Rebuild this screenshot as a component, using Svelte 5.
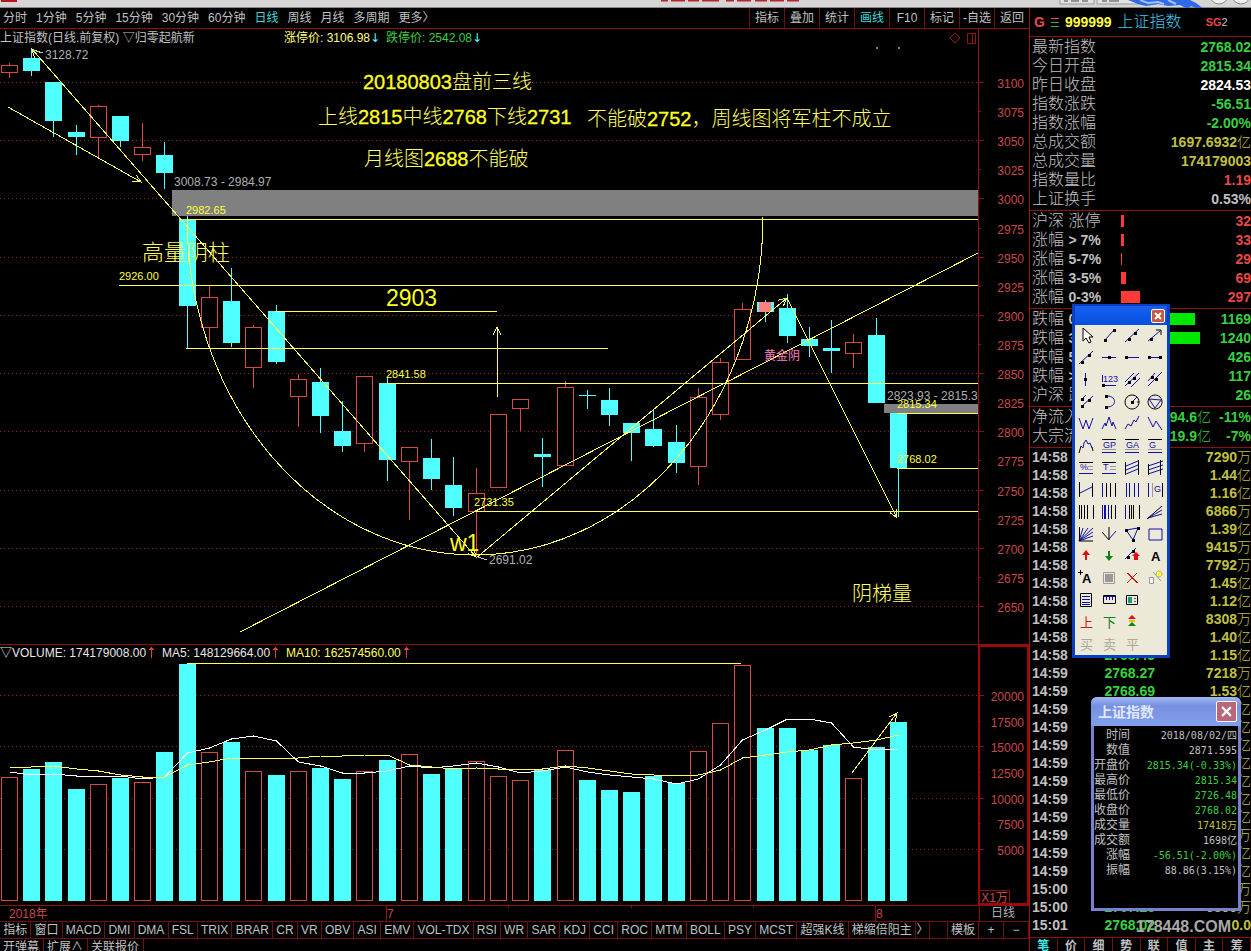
<script lang="ts">
	type Candle = [string, number, number, number, number, number];
	type Icon = {
		name: string;
		blue?: string;
		black?: string;
		dots?: number[][];
		shapes?: string[][];
		text?: string;
		color?: string;
		size?: number;
	};

	const periods = ['分时', '1分钟', '5分钟', '15分钟', '30分钟', '60分钟', '日线', '周线', '月线', '多周期', '更多〉'];
	const tools = ['指标', '叠加', '统计', '画线', 'F10', '标记', '-自选', '返回'];
	const indicators = [
		'指标', '窗口', 'MACD', 'DMI', 'DMA', 'FSL', 'TRIX', 'BRAR', 'CR', 'VR', 'OBV', 'ASI', 'EMV', 'VOL-TDX',
		'RSI', 'WR', 'SAR', 'KDJ', 'CCI', 'ROC', 'MTM', 'BOLL', 'PSY', 'MCST', '超强K线', '梯缩倍阳主'
	];
	const sideTabs = ['笔', '价', '细', '势', '联', '值', '主', '筹'];

	// kind, high, body top, body bottom, low, volume top (chart units)
	const candles: Candle[] = [
		['up', 63, 65, 73, 78, 777],
		['down', 49, 58, 71, 76, 769],
		['down', 82, 82, 121, 137, 762],
		['down', 125, 132, 137, 155, 789],
		['up', 105, 106, 138, 158, 784],
		['down', 116, 116, 141, 147, 778],
		['up', 123, 147, 155, 161, 782],
		['down', 142, 155, 173, 189, 752],
		['down', 216, 219, 306, 349, 664],
		['up', 286, 297, 328, 347, 752],
		['down', 268, 301, 343, 347, 742],
		['up', 325, 327, 368, 388, 771],
		['down', 305, 311, 362, 364, 775],
		['up', 374, 379, 397, 427, 771],
		['down', 368, 382, 416, 433, 768],
		['down', 401, 431, 446, 452, 779],
		['up', 376, 376, 444, 452, 771],
		['down', 377, 383, 460, 481, 760],
		['up', 447, 447, 462, 520, 754],
		['down', 439, 458, 479, 490, 774],
		['down', 457, 485, 508, 516, 768],
		['up', 468, 493, 512, 556, 761],
		['up', 414, 414, 488, 488, 776],
		['up', 399, 399, 409, 431, 780],
		['down', 438, 454, 457, 487, 770],
		['up', 381, 387, 466, 466, 750],
		['down', 390, 395, 396, 409, 780],
		['down', 388, 400, 415, 426, 790],
		['down', 423, 423, 433, 461, 792],
		['down', 409, 429, 446, 447, 776],
		['down', 425, 442, 463, 473, 783],
		['up', 388, 397, 467, 485, 751],
		['up', 358, 362, 415, 420, 723],
		['up', 303, 309, 360, 360, 665],
		['down', 300, 302, 312, 322, 728],
		['down', 294, 308, 336, 343, 728],
		['down', 327, 339, 346, 357, 750],
		['down', 320, 348, 351, 373, 745],
		['up', 334, 342, 354, 368, 778],
		['down', 318, 335, 403, 403, 747],
		['down', 413, 413, 468, 517, 722]
	];
	const ma5 = [
		772, 775, 774, 776, 776, 776, 779, 777, 753, 748, 739, 736, 741, 762, 766, 773, 773, 771, 766, 768, 766,
		763, 767, 773, 771, 767, 772, 775, 777, 779, 784, 779, 765, 740, 730, 719, 719, 723, 747, 750, 749
	];
	const ma10 = [
		767, 767, 766, 769, 771, 775, 777, 777, 765, 762, 758, 758, 759, 758, 756, 756, 755, 755, 765, 767, 769,
		768, 769, 769, 769, 766, 768, 771, 774, 775, 776, 775, 770, 758, 755, 752, 750, 745, 743, 740, 735
	];

	const barX = (i: number) => Math.floor(9.38 + 22.225 * i) + 0.5;
	const priceY = (p: number) => Math.round(82 + (3100 - p) * 1.1645) + 0.5;
	const volumeY = (v: number) => Math.round(695 + (20000 - v) * 0.01025) + 0.5;
	const toPoints = (list: number[]) => list.map((y, i) => `${barX(i)},${y}`).join(' ');

	const prices = Array.from({ length: 19 }, (_, i) => 3100 - i * 25);
	const volumes = [20000, 17500, 15000, 12500, 10000, 7500, 5000];

	// x1, x2, y
	const levels = [
		[187, 978, 219],
		[119, 978, 285],
		[276, 497, 311],
		[186, 608, 348],
		[387, 978, 383],
		[897, 978, 413],
		[897, 978, 468],
		[476, 978, 511]
	];

	// Arrow head at the end of a segment
	function arrowHead(x1: number, y1: number, x2: number, y2: number) {
		const a = Math.atan2(y2 - y1, x2 - x1);
		const at = (d: number) => `${x2 - 9 * Math.cos(a + d)} ${y2 - 9 * Math.sin(a + d)}`;
		return `M${at(0.45)}L${x2} ${y2}L${at(-0.45)}`;
	}

	// Keep the 亿 / 万 unit apart from the number
	const splitUnit = (value: string) => [value.replace(/[亿万]$/, ''), value.match(/[亿万]$/)?.[0] ?? ''];

	const segments = [
		[476, 557, 32, 49],
		[32, 49, 476, 557],
		[8, 107, 141, 182],
		[476, 558, 787, 298],
		[787, 298, 897, 518],
		[497, 397, 497, 327]
	];

	const quotes = [
		['最新指数', '2768.02', 'green'],
		['今日开盘', '2815.34', 'green'],
		['昨日收盘', '2824.53', 'white'],
		['指数涨跌', '-56.51', 'green'],
		['指数涨幅', '-2.00%', 'green'],
		['总成交额', '1697.6932亿', 'gold'],
		['总成交量', '174179003', 'gold'],
		['指数量比', '1.19', 'red'],
		['上证换手', '0.53%', 'gray']
	];
	const rises: [string, string, number, string][] = [
		['沪深', '涨停', 3, '32'],
		['涨幅', '> 7%', 3, '33'],
		['涨幅', '5-7%', 1, '29'],
		['涨幅', '3-5%', 5, '69'],
		['涨幅', '0-3%', 19, '297']
	];
	const falls: [string, string, number, string][] = [
		['跌幅', '0-3%', 74, '1169'],
		['跌幅', '3-5%', 79, '1240'],
		['跌幅', '5-7%', 27, '426'],
		['跌幅', '> 7%', 8, '117'],
		['沪深', '跌停', 2, '26']
	];
	const flows = [
		['净流入', '-94.6亿', '-11%'],
		['大宗流入', '-119.9亿', '-7%']
	];
	const ticks = [
		['14:58', '2766.91', '7290万'],
		['14:58', '2767.02', '1.44亿'],
		['14:58', '2767.35', '1.16亿'],
		['14:58', '2767.18', '6866万'],
		['14:58', '2767.40', '1.39亿'],
		['14:58', '2767.52', '9415万'],
		['14:58', '2767.61', '7792万'],
		['14:58', '2767.83', '1.45亿'],
		['14:58', '2767.95', '1.12亿'],
		['14:58', '2768.12', '8308万'],
		['14:58', '2768.30', '1.40亿'],
		['14:58', '2768.43', '1.15亿'],
		['14:59', '2768.27', '7218万'],
		['14:59', '2768.69', '1.53亿'],
		['14:59', '2768.55', '1.21亿'],
		['14:59', '2768.40', '1.32亿'],
		['14:59', '2768.36', '1.18亿'],
		['14:59', '2768.21', '1.27亿'],
		['14:59', '2768.10', '1.44亿'],
		['14:59', '2767.98', '1.36亿'],
		['14:59', '2767.84', '1.09亿'],
		['14:59', '2767.72', '9630万'],
		['14:59', '2767.60', '1.24亿'],
		['14:59', '2767.51', '1.41亿'],
		['15:00', '2767.39', '8152万'],
		['15:00', '2767.26', '6500万'],
		['15:01', '2768.02', '0.0']
	];
	const details = [
		['时间', '2018/08/02/四', 'gray'],
		['数值', '2871.595', 'gray'],
		['开盘价', '2815.34(-0.33%)', 'green'],
		['最高价', '2815.34', 'green'],
		['最低价', '2726.48', 'green'],
		['收盘价', '2768.02', 'green'],
		['成交量', '17418万', 'gold'],
		['成交额', '1698亿', 'gray'],
		['涨幅', '-56.51(-2.00%)', 'green'],
		['振幅', '88.86(3.15%)', 'gray']
	];

	const icons: Icon[] = [
		{ name: '选择', shapes: [['#000', '#fff', 'M8 3v13l3-3 3 5 2-1-2-5h4z']] },
		{ name: '线段', blue: 'M6 16L16 5', dots: [[7, 15], [16, 5]] },
		{ name: '直线', blue: 'M4 17L18 4', dots: [[8, 14], [14, 8]] },
		{ name: '箭头', blue: 'M4 16L16 6', black: 'M12 5h5v5', dots: [[7, 14]] },
		{ name: '射线', blue: 'M4 17L18 4', dots: [[7, 15], [14, 8]] },
		{ name: '水平线', blue: 'M4 10.5H18', dots: [[11, 10]] },
		{ name: '水平射线', blue: 'M4 10.5H18', dots: [[5, 10]] },
		{ name: '水平线段', blue: 'M4 10.5H17', dots: [[5, 10], [16, 10]] },
		{ name: '垂直线', blue: 'M10.5 4V17', dots: [[10, 10]] },
		{ name: '价格标注', blue: 'M5 16.5H18M4.5 6V13', dots: [[5, 16]], text: '123', size: 9 },
		{ name: '平行线', blue: 'M4 13L13 4M4 17L18 4M10 18L19 9', dots: [[8, 13], [13, 9]] },
		{ name: '等距线', blue: 'M4 12L11 4M4 17L18 3', dots: [[8, 8], [12, 10]] },
		{ name: '通道线', blue: 'M6 9L11 4M6 16L18 5', dots: [[7, 8], [7, 15], [14, 9]] },
		{ name: '圆弧', blue: 'M9 5C19 5 19 16 9 16', dots: [[8, 5], [8, 16]] },
		{ name: '圆', blue: 'M11 11L16 6', black: 'M11 4a7 7 0 1 0 .1 0M16 11h2', dots: [[11, 11]] },
		{ name: '外接圆', blue: 'M5 8L17 9L11 17Z', black: 'M11 4a7 7 0 1 0 .1 0' },
		{ name: 'W线', blue: 'M4 5L8 16L11 7L14 16L18 5' },
		{ name: '三浪', blue: 'M4 16L7 10L8 13L11 4L14 13L15 9L18 16' },
		{ name: '上升浪', blue: 'M4 16L7 11L10 13L13 7L15 9L18 3' },
		{ name: '下降浪', blue: 'M4 4L9 14L12 8L18 17' },
		{ name: '头肩', blue: 'M6 11L8 13L9 8L11 5L13 9L15 8L17 13', black: 'M4 18L6 11M17 12L18 16' },
		{ name: '黄金价位', black: 'M4 4.5H18', blue: 'M4 17.5H18', shapes: [['#999', 'none', 'M4 14.500H18']], text: 'GP', size: 9 },
		{ name: '黄金目标', black: 'M4 4.5H18', blue: 'M4 17.5H18', shapes: [['#999', 'none', 'M4 14.500H18']], text: 'GA', size: 9 },
		{ name: '黄金分割', black: 'M4 4.5H18', blue: 'M4 17.5H18', shapes: [['#999', 'none', 'M4 14.500H18']], text: 'G', size: 9 },
		{ name: '百分比线', black: 'M4 5.5H18', blue: 'M4 16.5H18', shapes: [['#999', 'none', 'M13 9.5H18M13 12.5H18']], text: '%', size: 9 },
		{ name: '波段线', black: 'M4 5.5H18', blue: 'M4 16.5H18', shapes: [['#999', 'none', 'M12 9.5H18M12 12.5H18']], text: 'T', size: 9 },
		{ name: '线性回归带', blue: 'M5 9L17 4M5 13L17 8M5 17L17 12', black: 'M4.500 5V18M17.500 3V18' },
		{ name: '回归通道', blue: 'M4 9L19 4M4 13L19 8M4 17L19 12', black: 'M4.5 7V18M16.500 3V18' },
		{ name: '线性回归', blue: 'M5 14L17 8', black: 'M4.5 3V18M17.5 4V18' },
		{ name: '周期线', blue: 'M4.5 4V18', black: 'M8.500 4V18M12.500 4V18M17.5 4V18' },
		{ name: '等周期线', blue: 'M5.5 4V18M8.5 4V18M13.5 4V18M17.5 4V18' },
		{ name: '江恩周期', blue: 'M4.5 4V18', shapes: [['#999', 'none', 'M8.5 4V18'], ['#000', 'none', 'M18.500 4V18']], text: ' G', size: 9 },
		{ name: '斐波那契', black: 'M4.5 4V18M6.500 4V18M9.500 4V18M12.500 4V18M18.500 4V18' },
		{ name: '阳历', blue: 'M4.5 4V18M6.5 4V18M7.5 4V18M10.5 4V18', black: 'M13.500 4V18M17.500 4V18' },
		{ name: '阴历', blue: 'M4.5 4V18', black: 'M8.500 4V18M10.500 4V18M12.500 4V18M18.5 4V18' },
		{ name: '速阻线', blue: 'M4 17L18 9M4 17L18 13', black: 'M3 18L18 5' },
		{ name: '甘氏线', blue: 'M4 18L8 5M4 18L13 5M4 18L18 5M4 18L18 9M4 18L18 13', black: 'M4.5 4V18H18' },
		{ name: '安德鲁', blue: 'M11 16L18 8', black: 'M11 4V17L4 9' },
		{ name: '三角形', blue: 'M5 7L17 5L12 17Z', dots: [[5, 7], [17, 5], [12, 17]] },
		{ name: '矩形', blue: 'M5 6H18V17H5Z' },
		{ name: '上箭头', shapes: [['none', '#e01010', 'M11 5l4 5h-3v5h-2v-5H7z']] },
		{ name: '下箭头', shapes: [['none', '#108010', 'M11 16l4-5h-3V6h-2v5H7z']] },
		{ name: '箭头标注', blue: 'M4 14L15 3', dots: [[7, 12], [12, 6]], shapes: [['none', '#e01010', 'M15 7l4 4h-2v4h-4v-4h-2z']] },
		{ name: '文字', text: 'A', color: '#000', size: 13 },
		{ name: '标题', black: 'M3 5.500H8M5.500 3V8', text: 'A', color: '#000', size: 13 },
		{ name: '屏蔽', shapes: [['#999', '#ece9d8', 'M5.500 5.500H16.500V16.500H5.500Z'], ['none', '#999', 'M7 7H15V15H7Z']] },
		{ name: '删除', shapes: [['#d01818', 'none', 'M6 6L16 16M16 6L6 16M7 6L17 16']] },
		{ name: '隐藏', shapes: [['#999', '#fff', 'M5.5 10.5H9.5V16.5H5.5Z'], ['#999', 'none', 'M9 5L17 14'], ['#aa9', '#ffff30', 'M15 4a3 3 0 1 0 .1 0']] },
		{ name: '列表', black: 'M5.500 4.500H16.500V17.500H5.500Z', blue: 'M7 7.500H15M7 10.500H15M7 13.500H15M7 15.500H15' },
		{ name: '标尺', black: 'M5.500 6.500H17.500V14.500H5.500Z', blue: 'M6 7.500H17M8.500 7V11M11.500 7V11M14.500 7V11' },
		{ name: '截图', black: 'M5.500 6.500H16.500V15.500H5.500Z', shapes: [['none', '#18a070', 'M7 8h4v6H7z'], ['#555', 'none', 'M13 9.500h2M13 12.500h2']] },
		{ name: '' },
		{ name: '上', text: '上', color: '#d01818', size: 13 },
		{ name: '下', text: '下', color: '#108010', size: 13 },
		{ name: '多空', shapes: [['none', '#e01010', 'M11 4l4 4H7z'], ['none', '#e8c000', 'M8 9h6v2H8z'], ['none', '#108010', 'M11 11l4 4H7z']] },
		{ name: '' },
		{ name: '买', text: '买', color: '#aca899', size: 13 },
		{ name: '卖', text: '卖', color: '#aca899', size: 13 },
		{ name: '平', text: '平', color: '#aca899', size: 13 }
	];

	let period = '日线';
	let tool = '画线';
	let showPalette = true;
	let showDetails = true;
</script>

<div class="app">
	<svg class="titlebar" viewBox="0 0 1251 8" aria-hidden="true">
		<rect width="1251" height="8" fill="#d6d4d4" />
		<rect y="7" width="1251" height="1" fill="#8a8888" />
		<rect x="1" width="16" height="2" fill="#b81818" />
		<path d="M661 .5h7m3 0h14m3 0h11m3 0h17m7 0h8m3 0h14m4 0h12m3 0h14m3 0h12" stroke="#b02828" stroke-width="2" />
		<rect x="1060" y="-4" width="34" height="8" fill="#e4e2e2" stroke="#999" />
		<rect x="1097" y="-4" width="60" height="8" fill="#e4e2e2" stroke="#999" />
		<path d="M1064 1h4m3 0h8m3 0h6m14 0h5m2 0h10" stroke="#444" />
		<path d="M1128 0h62l6 3 8 6h-5l-8-3-3 3-8-4-12 1-10-2-12 2-8-2z" fill="#2f6ae8" />
		<path d="M1140 0l8 3 10-1 6 2M1168 0l8 4" stroke="#9cc4ff" stroke-width="2" fill="none" />
		<circle cx="1219" cy="-5" r="9" fill="#eee" stroke="#888" />
		<circle cx="1241" cy="-5" r="9" fill="#eee" stroke="#888" />
	</svg>

	<div class="layout">
		<main>
			<nav class="toolbar">
				<div class="periods">
					{#each periods as item}
						<button class:active={item === period} on:click={() => (period = item)}>{item}</button>
					{/each}
				</div>
				<div class="tools">
					{#each tools as item}
						<button class:active={item === tool} on:click={() => (tool = item)}>{item}</button>
					{/each}
				</div>
			</nav>

			<header class="chart-head">
				<div class="chart-title">
					<span class="name">上证指数(日线.前复权) ▽归零起航新</span>
					<span class="limit">涨停价: 3106.98<i>↓</i></span>
					<span class="limit green">跌停价: 2542.08<i>↓</i></span>
					<svg class="marks" viewBox="0 0 30 14" aria-hidden="true">
						<path d="M7 2l5 5-5 5-5-5zM19.500 2.500h8v10h-8zM24.500 2.500v10" />
					</svg>
				</div>
			</header>

			<svg class="chart" viewBox="0 47 1029 597" role="img" aria-label="日线">
				<g class="crisp">
					{#each prices as p}
						{#if p % 50 === 0}
							<line class="grid" x1="0" x2="978" y1={priceY(p)} y2={priceY(p)} />
						{/if}
						<line class="frame" x1="979" x2={p % 50 === 0 ? 984 : 981} y1={priceY(p)} y2={priceY(p)} />
					{/each}
					<line class="frame" x1="978.5" x2="978.5" y1="47" y2="644" />
					<rect x="172" y="190" width="806" height="26" fill="#808080" />
					<rect x="884" y="404" width="94" height="9" fill="#808080" />
					<path d="M876 48h2M898 48h2" stroke="#86c" stroke-width="2" />

					{#each candles as [kind, high, top, bottom, low], i}
						<g class={kind}>
							<line x1={barX(i)} x2={barX(i)} y1={high} y2={top} />
							<line x1={barX(i)} x2={barX(i)} y1={bottom} y2={low} />
							{#if kind === 'up'}
								<rect x={barX(i) - 8} y={top + 0.5} width="16" height={bottom - top - 1} />
							{:else}
								<rect x={barX(i) - 8.5} y={top} width="17" height={bottom - top} />
							{/if}
						</g>
					{/each}
					<rect x="759" y="302" width="12" height="10" fill="#ff8080" />

					{#each levels as [x1, x2, y]}
						<line class="pen" {x1} {x2} y1={y + 0.5} y2={y + 0.5} />
					{/each}
					{#each segments as [x1, y1, x2, y2]}
						<line class="pen" {x1} {y1} {x2} {y2} />
						<path class="pen" d={arrowHead(x1, y1, x2, y2)} />
					{/each}
					<line class="pen" x1="240" y1="632" x2="978" y2="253" />
					<path class="pen" d="M187 217A288 338 0 0 0 763 217" />
					<path class="hint" d="M33 50L43 53M478 557L487 560" />
				</g>

				<g class="axis">
					{#each prices as p}
						<text x="1024" y={priceY(p) + 5}>{p}</text>
					{/each}
				</g>
				<g class="plain">
					<text x="45" y="59">3128.72</text>
					<text x="174" y="186">3008.73 - 2984.97</text>
					<text x="489" y="564">2691.02</text>
					<text x="887" y="400">2823.93 - 2815.3</text>
				</g>
				<g class="level">
					<text x="186" y="214">2982.65</text>
					<text x="119" y="280">2926.00</text>
					<text x="386" y="378">2841.58</text>
					<text x="474" y="506">2731.35</text>
					<text x="897" y="408">2815.34</text>
					<text x="897" y="463">2768.02</text>
				</g>
				<g class="note">
					<text x="363" y="89"><tspan>20180803</tspan>盘前三线</text>
					<text x="318" y="124">上线<tspan>2815</tspan>中线<tspan>2768</tspan>下线<tspan>2731</tspan></text>
					<text x="587" y="126">不能破<tspan>2752</tspan>，周线图将军柱不成立</text>
					<text x="364" y="166">月线图<tspan>2688</tspan>不能破</text>
					<text x="852" y="601">阴梯量</text>
					<text class="big" x="142" y="260">高量阴柱</text>
					<text class="large" x="386" y="306">2903</text>
					<text class="large" x="450" y="551">w1</text>
				</g>
				<text class="pink" x="764" y="360">黄金阴</text>
			</svg>

			<svg class="chart" viewBox="0 644 1029 261" role="img" aria-label="VOLUME">
				<g class="crisp">
					<line class="frame" x1="0" x2="1029" y1="644.5" y2="644.5" />
					{#each volumes as v}
						{#if v % 5000 === 0}
							<line class="grid" x1="0" x2="978" y1={volumeY(v)} y2={volumeY(v)} />
						{/if}
						<line class="frame" x1="979" x2={v % 5000 === 0 ? 984 : 981} y1={volumeY(v)} y2={volumeY(v)} />
					{/each}
					{#each candles as [kind, , , , , volume], i}
						<g class={kind}>
							{#if kind === 'up'}
								<rect x={barX(i) - 8} y={volume + 0.5} width="16" height={900 - volume} />
							{:else}
								<rect x={barX(i) - 8.5} y={volume} width="17" height={901 - volume} />
							{/if}
						</g>
					{/each}
					<polyline points={toPoints(ma5)} stroke="#fff" fill="none" />
					<polyline points={toPoints(ma10)} stroke="#ff6" fill="none" />
					<line class="pen" x1="187" x2="741" y1="663.5" y2="663.5" />
					<path class="pen" d="M852 773L897 713{arrowHead(852, 773, 897, 713)}" />
					<path d="M979 646H1028V904H979Z" fill="none" stroke="#a00808" stroke-width="2" />
					<path class="frame" d="M979 890.500H1009.500V904" />
				</g>
				<g class="axis">
					{#each volumes as v}
						<text x="1024" y={volumeY(v) + 5}>{v}</text>
					{/each}
					<text x="1008" y="902">X1万</text>
				</g>
				<g class="legend">
					<text x="0" y="657">▽VOLUME: 174179008.00</text>
					<text x="162" y="657">MA5: 148129664.00</text>
					<text class="yellow" x="286" y="657">MA10: 162574560.00</text>
					{#each [151, 275, 406] as x}
						<path class="rise" d="M{x} 650h3v-1h-1v-1h-1v-1h-1v-1M{x} 650h-2v-1h1v-1h1v10h1v-8" />
					{/each}
				</g>
			</svg>

			<svg class="chart" viewBox="0 905 1029 16" role="img" aria-label="2018年">
				<path class="frame crisp" d="M0 905.500H1029M386.500 905V921M875.500 905V921M508.500 905v3M631.500 905v3M753.500 905v3M979.500 905V921" />
				<g class="date">
					<text x="9" y="918">2018年</text>
					<text x="387" y="918">7</text>
					<text x="876" y="918">8</text>
					<text class="cycle" x="991" y="917">日线</text>
				</g>
			</svg>

			<nav class="indicators">
				<div class="list">
					{#each indicators as item}
						<button>{item}</button>
					{/each}
				</div>
				<button class="more">〉</button>
				<span class="blank"></span>
				<button class="template">模板</button>
				<button class="zoom">+</button>
				<button class="zoom">−</button>
			</nav>
			<nav class="extras">
				<button>开弹幕</button>
				<button>扩展∧</button>
				<button>关联报价</button>
			</nav>
		</main>

		<aside>
			<header class="symbol">
				<b class="red">G</b>
				<svg viewBox="0 0 8 9" aria-hidden="true">
					<path d="M0 .5h8" stroke="#e04040" /><path d="M0 4.500h8M0 8.500h8" stroke="#3a4" />
				</svg>
				<b class="code">999999</b>
				<span class="title">上证指数</span>
				<span class="tag"><b>SG</b>2</span>
			</header>

			<table class="quotes">
				<tbody>
					{#each quotes as [label, value, color]}
						<tr><th>{label}</th><td class={color}>{splitUnit(value)[0]}<span>{splitUnit(value)[1]}</span></td></tr>
					{/each}
				</tbody>
			</table>

			{#each [rises, falls] as group, g}
				<table class="quotes">
					<tbody>
						{#each group as [label, range, width, count]}
							<tr>
								<th class="range">{label} <b class:cjk={label === '沪深'}>{range}</b></th>
								<td class="bar"><div class:fall={g === 1} style="width: {width}px"></div></td>
								<td class={g === 1 ? 'green' : 'red'}>{count}</td>
							</tr>
						{/each}
					</tbody>
				</table>
			{/each}

			<table class="quotes">
				<tbody>
					{#each flows as [label, amount, percent]}
						<tr>
							<th>{label}</th>
							<td class="green">{splitUnit(amount)[0]}<span>{splitUnit(amount)[1]}</span></td>
							<td class="green percent">{percent}</td>
						</tr>
					{/each}
				</tbody>
			</table>

			<table class="ticks">
				<tbody>
					{#each ticks as [time, price, amount]}
						<tr>
							<td class="time">{time}</td>
							<td class="price green">{price}</td>
							<td class="gold">{splitUnit(amount)[0]}<span>{splitUnit(amount)[1]}</span></td>
						</tr>
					{/each}
				</tbody>
			</table>

			<nav class="side-tabs">
				{#each sideTabs as tab, i}
					<button class:active={i === 0}>{tab}</button>
				{/each}
			</nav>
		</aside>
	</div>

	{#if showPalette}
		<section class="palette" aria-label="画线工具">
			<div class="bar">
				<button class="close" aria-label="关闭" on:click={() => (showPalette = false)}>
					<svg viewBox="0 0 10 10"><path d="M2 2l6 6M8 2l-6 6" /></svg>
				</button>
			</div>
			<div class="icons">
				{#each icons as icon}
					{#if icon.name}
						<button aria-label={icon.name}>
							<svg viewBox="0 0 23 22">
								{#if icon.blue}<path d={icon.blue} stroke="#1010a8" fill="none" />{/if}
								{#if icon.black}<path d={icon.black} stroke="#000" fill="none" />{/if}
								{#each icon.shapes ?? [] as [stroke, fill, d]}
									<path {d} {stroke} {fill} />
								{/each}
								{#each icon.dots ?? [] as [x, y]}
									<rect x={x - 1} y={y - 1} width="3" height="3" />
								{/each}
								{#if icon.text}
									<text
										x={icon.text[0] === ' ' ? 10 : icon.color === '#000' ? 7 : 5}
										y={icon.size === 9 ? 13 : 16}
										font-size={icon.size}
										font-weight={icon.color === '#000' ? 700 : 400}
										fill={icon.color ?? '#1010a8'}>{icon.text.trim()}</text
									>
								{/if}
							</svg>
						</button>
					{:else}
						<span></span>
					{/if}
				{/each}
			</div>
		</section>
	{/if}

	{#if showDetails}
		<section class="details">
			<div class="bar">
				<h2>上证指数</h2>
				<button class="close" aria-label="关闭" on:click={() => (showDetails = false)}>
					<svg viewBox="0 0 10 10"><path d="M1 1l8 8M9 1l-8 8" /></svg>
				</button>
			</div>
			<table>
				<tbody>
					{#each details as [label, value, color]}
						<tr><th>{label}</th><td class={color}>{value}</td></tr>
					{/each}
				</tbody>
			</table>
		</section>
	{/if}

	<div class="watermark">178448.COM</div>
</div>

<style>
	:global(body) {
		margin: 0;
		background: #000;
	}

	.app {
		position: relative;
		height: 100vh;
		overflow: hidden;
		background: #000;
		color: #c0c0c0;
		font-family: 'Liberation Sans', 'Noto Sans CJK SC', sans-serif;
		font-size: 12px;
		line-height: 16px;
	}

	button {
		margin: 0;
		padding: 0;
		border: 0;
		background: none;
		color: inherit;
		font: inherit;
		white-space: nowrap;
		cursor: pointer;
	}

	table {
		width: 100%;
		border-spacing: 0;
	}

	th,
	td {
		padding: 0;
		font-weight: inherit;
		white-space: nowrap;
	}

	.titlebar {
		display: block;
		width: 100%;
	}

	.layout {
		display: grid;
		grid-template-columns: minmax(0, 1fr) 222px;
	}

	.toolbar {
		display: flex;
		justify-content: space-between;
		height: 20px;
		border-bottom: 1px solid #901010;
	}

	.periods {
		display: flex;
		gap: 9px;
		padding-left: 3px;
	}

	.tools {
		display: flex;
	}

	.tools button {
		width: 35px;
		border-left: 1px solid #701010;
	}

	.toolbar .active {
		color: #40d8d8;
	}

	.chart-head {
		display: grid;
		grid-template-columns: minmax(0, 1fr) 50px;
		height: 18px;
		line-height: 18px;
	}

	.chart-title {
		display: flex;
		border-right: 1px solid #901010;
	}

	.name {
		width: 284px;
	}

	.limit {
		width: 102px;
		color: #ffff80;
		white-space: nowrap;
	}

	.limit.green {
		color: #38d040;
	}

	.limit i {
		color: #50ffff;
		font-family: 'DejaVu Sans', sans-serif;
		font-style: normal;
	}

	.marks {
		width: 30px;
		height: 14px;
		margin: 2px 0 0 auto;
		fill: none;
		stroke: #901818;
	}

	.chart {
		display: block;
		width: 100%;
	}

	.crisp {
		shape-rendering: crispEdges;
	}

	.grid {
		stroke: #902818;
		stroke-dasharray: 1 3;
	}

	.frame {
		fill: none;
		stroke: #901010;
	}

	.up {
		fill: #000;
		stroke: #d84848;
	}

	.down line {
		stroke: #50ffff;
	}

	.down rect {
		fill: #50ffff;
	}

	.pen {
		fill: none;
		stroke: #ffff60;
	}

	.hint {
		stroke: #c0c0c0;
	}

	.axis,
	.date {
		fill: #c84848;
	}

	.axis {
		text-anchor: end;
	}

	.cycle,
	.plain {
		fill: #b0b0b0;
	}

	.level {
		fill: #ffff40;
		font-size: 11px;
	}

	.note {
		fill: #ffff60;
		font-size: 20px;
		font-weight: 300;
	}

	.note tspan {
		fill: #ffff20;
		font-weight: 400;
		stroke: #ffff20;
		stroke-width: 0.3px;
	}

	.note .big {
		font-size: 22px;
	}

	.note .large {
		fill: #ffff20;
		font-size: 23px;
		font-weight: 400;
	}

	.pink {
		fill: #ff80c0;
	}

	.legend {
		fill: #e8e8e8;
	}

	.legend .yellow {
		fill: #ffff60;
	}

	.rise {
		fill: #e04040;
		shape-rendering: crispEdges;
	}

	.indicators {
		display: flex;
		height: 16px;
		border-top: 1px solid #701010;
		border-bottom: 1px solid #701010;
	}

	.list {
		display: flex;
		flex: 1;
		min-width: 0;
	}

	.indicators button,
	.blank {
		border-right: 1px solid #701010;
	}

	.list button {
		flex: 1 1 auto;
	}

	.more {
		width: 14px;
		overflow: hidden;
	}

	.blank {
		width: 17px;
	}

	.template {
		width: 31px;
	}

	.zoom {
		width: 25px;
	}

	.extras {
		display: flex;
	}

	.extras button {
		padding: 0 4px 0 3px;
		border-right: 1px solid #701010;
	}

	aside {
		box-sizing: border-box;
		border-left: 1px solid #a01010;
		font-size: 14px;
		font-weight: 700;
	}

	.symbol {
		display: flex;
		align-items: center;
		gap: 6px;
		height: 28px;
		padding-left: 4px;
	}

	.symbol svg {
		width: 8px;
		height: 9px;
	}

	.code {
		color: #ffff40;
	}

	.title {
		color: #40c8e8;
		font-size: 16px;
		font-weight: 300;
	}

	.tag {
		margin-left: 18px;
		font-size: 11px;
		font-weight: 400;
	}

	.tag b {
		color: #e84848;
	}

	.quotes {
		margin-bottom: 2px;
		border-top: 1px solid #901010;
	}

	.quotes tr {
		height: 19px;
	}

	.quotes th {
		padding-left: 2px;
		font-size: 16px;
		font-weight: 300;
		line-height: 18px;
		text-align: left;
	}

	.quotes td {
		line-height: 18px;
		text-align: right;
	}

	.quotes span,
	.ticks span {
		font-weight: 300;
	}

	.quotes .range {
		width: 89px;
	}

	.range b {
		font-size: 14px;
		font-weight: 700;
		line-height: 16px;
	}

	.range .cjk {
		font-size: 16px;
		font-weight: 300;
	}

	.quotes .bar {
		text-align: left;
	}

	.bar div {
		height: 12px;
		background: #ff3838;
	}

	.bar .fall {
		background: #00e800;
	}

	.quotes .percent {
		width: 40px;
	}

	.green {
		color: #38d040;
	}

	.red {
		color: #e84848;
	}

	.gold {
		color: #c0c040;
	}

	.white {
		color: #fff;
	}

	.gray {
		color: #c0c0c0;
	}

	.ticks {
		margin-bottom: 3px;
		border-top: 1px solid #901010;
	}

	.ticks tr {
		height: 18px;
	}

	.ticks td {
		line-height: 16px;
		text-align: right;
	}

	.ticks .time {
		width: 38px;
		padding-left: 2px;
		text-align: left;
	}

	.ticks .price {
		width: 85px;
	}

	.side-tabs {
		display: flex;
		border-top: 1px solid #901010;
		font-size: 12px;
	}

	.side-tabs button {
		flex: 1;
		border-right: 1px solid #701010;
	}

	.side-tabs .active {
		color: #40e8e8;
	}

	.palette {
		position: absolute;
		top: 304px;
		right: 81px;
		width: 92px;
		border: 3px solid #0840c0;
		border-top-width: 2px;
		background: #ece9d8;
	}

	.palette .bar {
		display: flex;
		align-items: center;
		justify-content: flex-end;
		height: 19px;
		padding-right: 2px;
		background: linear-gradient(#1860f0, #0450e0);
	}

	.close {
		box-sizing: border-box;
		border: 1px solid #fff;
		border-radius: 2px;
		background: #c85840;
	}

	.close svg {
		display: block;
		stroke: #fff;
		stroke-width: 2;
	}

	.palette .close {
		width: 14px;
		height: 14px;
		padding: 1px;
	}

	.icons {
		display: grid;
		grid-template-columns: repeat(4, 1fr);
	}

	.icons svg {
		display: block;
		width: 23px;
		height: 22px;
	}

	.details {
		position: absolute;
		top: 697px;
		right: 10px;
		box-sizing: border-box;
		width: 150px;
		height: 214px;
		border: 3px solid #7880d0;
		border-top: 0;
		border-radius: 6px 6px 0 0;
		background: #000;
	}

	.details .bar {
		display: flex;
		align-items: center;
		justify-content: space-between;
		height: 29px;
		margin: 0 -3px 2px;
		padding: 0 4px 0 7px;
		border-radius: 6px 6px 0 0;
		background: linear-gradient(#a0b8f4, #7890e0 30%, #80a0ec);
	}

	.details h2 {
		margin: 0;
		color: #e0e8ff;
		font-size: 14px;
	}

	.details .close {
		width: 21px;
		height: 21px;
		padding: 4px;
		background: #b86878;
	}

	.details table {
		font-family: 'DejaVu Sans Mono', 'Noto Sans CJK SC', monospace;
		font-size: 10px;
		line-height: 15px;
	}

	.details th,
	.details td {
		height: 15px;
		padding-right: 1px;
		text-align: right;
	}

	.details th {
		width: 36px;
		font-size: 12px;
	}

	.watermark {
		position: absolute;
		right: 20px;
		bottom: 12px;
		color: #a8a8a8;
		font-size: 16px;
		font-weight: 700;
		line-height: 24px;
	}
</style>
